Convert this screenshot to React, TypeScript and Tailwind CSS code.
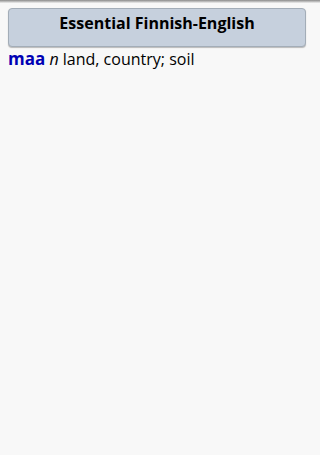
export default function App() {
  return (
    <div className="relative h-[455px] w-[320px] overflow-hidden bg-[#f8f8f8] font-['Open_Sans',sans-serif]">
      <div className="h-[3px] bg-gradient-to-b from-[#8a8a8a] to-[#f0f0f0]" />
      <div className="px-2 pt-[5px]">
        <div className="flex h-[39px] w-[298px] justify-center rounded-[4px] border border-[#a3adb8] bg-[#c6d0dd] pt-[3px] shadow-[0_1px_1px_rgba(0,0,0,0.25)]">
          <h1 className="text-[16px] font-bold leading-[22px] text-black">Essential Finnish-English</h1>
        </div>
        <p className="mt-[1px] text-[16px] leading-[22px] text-black">
          <span className="text-[17px] font-bold text-[#0000b4]">maa</span>{" "}
          <i>n</i> land, country; soil
        </p>
      </div>
    </div>
  );
}
